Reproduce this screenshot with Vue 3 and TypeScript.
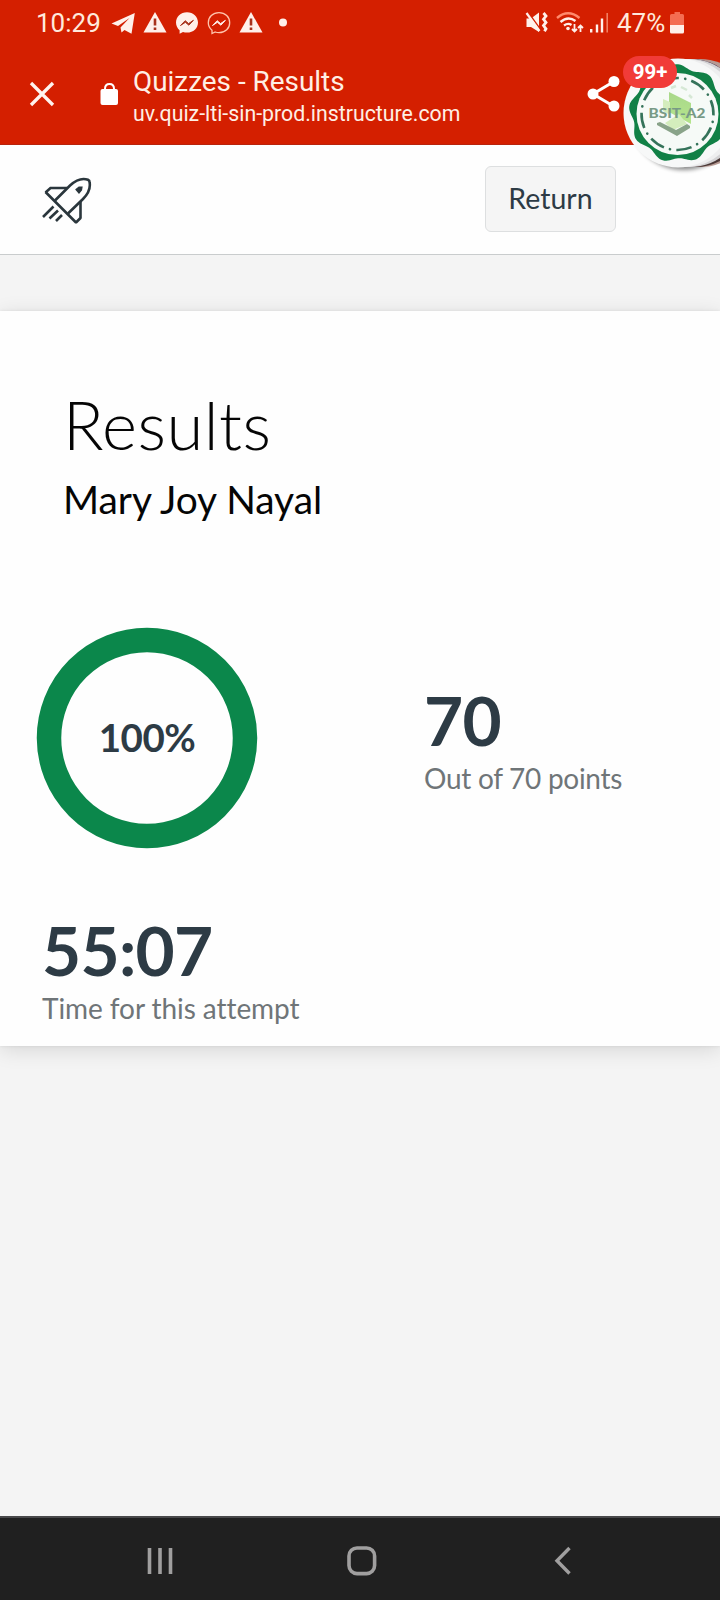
<script setup lang="ts">
interface Stat {
  value: string
  label: string
}

const score: Stat = { value: '70', label: 'Out of 70 points' }
const time: Stat = { value: '55:07', label: 'Time for this attempt' }

/* Scalloped outline of the seal on the floating chat head. */
function scallop(cx: number, cy: number, r: number, amp: number, lobes: number, phase: number): string {
  const pts: string[] = []
  for (let i = 0; i < 180; i++) {
    const a = (i / 180) * Math.PI * 2
    const d = r + amp * Math.cos(lobes * (a - phase))
    pts.push(`${(cx + d * Math.cos(a)).toFixed(2)},${(cy + d * Math.sin(a)).toFixed(2)}`)
  }
  return pts.join(' ')
}
const seal = scallop(56, 57.5, 47, 2.3, 9, 1.2)
</script>

<template>
  <div class="screen">
    <div class="top">
      <div class="status">
        <span class="clock">10:29</span>
        <svg class="notif" width="190" height="46" viewBox="100 0 190 46">
          <path d="M111.500 23.500 L134.800 13 L131.500 33.800 L124.500 30 L121.500 32.500 L120.500 27.500 L129.500 18 L118 26 Z" fill="#fff0ea" />
          <g fill="#fff0ea">
            <path d="M155 12 L166.500 32.500 H143.500 Z" />
            <path d="M251 12 L262.500 32.500 H239.500 Z" />
          </g>
          <g stroke="#a8321c" stroke-width="2.600">
            <path d="M155 18.500 V25.500 M155 27.500 V30 M251 18.500 V25.500 M251 27.500 V30" />
          </g>
          <path d="M187 12.300 C180.600 12.300 176 16.800 176 22.500 C176 25.600 177.400 28.300 179.600 30.200 V33.700 L183 32 C184.300 32.400 185.600 32.600 187 32.600 C193.400 32.600 198 28.200 198 22.500 C198 16.800 193.400 12.300 187 12.300 Z" fill="#fff0ea" />
          <path d="M180.500 25.500 L185.200 20.700 L188.600 23.600 L193.400 20.300 L188.900 25.200 L185.400 22.300 Z" fill="#a8321c" stroke="#a8321c" />
          <path d="M219 12.700 C212.800 12.700 208.300 17 208.300 22.700 C208.300 25.800 209.700 28.300 212 30.200 V33.500 L215.200 32 C216.500 32.500 217.700 32.700 219 32.700 C225.300 32.700 229.700 28.300 229.700 22.700 C229.700 17 225.200 12.700 219 12.700 Z" fill="none" stroke="#ffc5ad" stroke-width="1.300" />
          <path d="M212.500 25.500 L217.200 20.700 L220.600 23.600 L225.400 20.300 L220.900 25.200 L217.400 22.300 Z" fill="#fff0ea" stroke="#fff0ea" />
          <circle cx="283" cy="22.500" r="4" fill="#fff0ea" />
        </svg>
        <svg class="signals" width="92" height="46" viewBox="522 0 92 46" fill="none" stroke="#fff0ea">
          <path d="M526.500 18.500 H531 L539 12.500 V32 L531 27 H526.500 Z" fill="#fff0ea" stroke="none" />
          <path d="M527.500 11.500 L541.500 31" stroke="#d41f00" stroke-width="1.600" />
          <path d="M526.500 13 L539.500 31" stroke-width="2.200" />
          <path d="M543.500 13 l2.500 3 l-2.500 3.200 l2.500 3.200 l-2.500 3.200 l2.500 3.200 l-1.500 2.500" stroke-width="2.800" />
          <path d="M557 18 Q568 8.500 579.500 18" stroke="#ff8a6c" stroke-width="2.400" />
          <path d="M560.500 22 Q568 15.500 575.500 21" stroke-width="2.400" />
          <path d="M564 25.500 Q568 22.500 571.500 25" stroke-width="2.200" />
          <circle cx="568" cy="28.500" r="1.800" fill="#fff0ea" stroke="none" />
          <path d="M574.500 24 V31.500 M572 29 L574.500 31.500 L577 29 M580.500 32 V25.500 M578 28 L580.500 25.500 L583 28" stroke-width="1.800" />
          <path d="M591.200 29 V32.500 M597 24.500 V32.500 M602 18.500 V32.500" stroke-width="2.400" />
          <path d="M607.200 13 V32.500" stroke="#f27f62" stroke-width="1.600" />
        </svg>
        <span class="battery-text">47%</span>
        <svg width="16" height="46" viewBox="669 0 16 46">
          <path d="M674.500 12 H680 V14 H682.500 Q684 14 684 15.500 V25 H670 V15.500 Q670 14 671.500 14 H674.500 Z" fill="#f46d52" />
          <path d="M670 25 H684 V32 Q684 33.500 682.500 33.500 H671.500 Q670 33.500 670 32 Z" fill="#fff0ea" />
        </svg>
      </div>
      <div class="toolbar">
        <svg class="close" width="26" height="26" viewBox="0 0 26 26">
          <path d="M2 2 L24 24 M24 2 L2 24" stroke="#fff3ee" stroke-width="3.300" fill="none" />
        </svg>
        <svg class="lock" width="20" height="25" viewBox="0 0 20 25">
          <path d="M5 10 V6.800 Q5 2 9.500 2 Q14 2 14 6.800 V10" fill="none" stroke="#fff" stroke-width="2" />
          <rect x=".5" y="7" width="17.500" height="16" rx="2" fill="#fff" />
        </svg>
        <div class="page-id">
          <div class="page-title">Quizzes - Results</div>
          <div class="page-url">uv.quiz-lti-sin-prod.instructure.com</div>
        </div>
        <svg class="share" width="34" height="38" viewBox="0 0 34 38">
          <path d="M27 6.500 L6 19 L27 31.500" stroke="#fff" stroke-width="3" fill="none" />
          <g fill="#fff">
            <circle cx="27" cy="6.500" r="5.500" />
            <circle cx="6" cy="19" r="5.500" />
            <circle cx="27" cy="31" r="5.500" />
          </g>
        </svg>
      </div>
    </div>

    <header class="app-bar">
      <svg class="rocket" width="50" height="48" viewBox="0 0 50 48" fill="none" stroke="#2a363c" stroke-width="2.600">
        <path d="M13 23.500 L28 8.500 C34 3 41 1 46 2.800 Q47.700 3.500 47.700 6 C48.500 12 46 17 41 22 L26 36.500" />
        <path d="M3.500 15 L34 45.500 L38.500 41 V24.500" stroke-linejoin="bevel" />
        <path d="M3.500 15.500 L8.500 11 H25" />
        <path d="M34 12.500 L37 10 H40 L39.500 13 L37 16 Z" fill="#2a363c" stroke-width="1.200" />
        <path d="M1 40 L11.500 29.500 M7.500 41.500 L16 33.500 M14 44 L20 38" />
      </svg>
      <button class="return">Return</button>
    </header>

    <main class="body">
      <section class="card">
        <h1>Results</h1>
        <h2>Mary Joy Nayal</h2>
        <div class="stats">
          <div class="donut">
            <svg width="222" height="222" viewBox="0 0 222 222">
              <circle cx="111" cy="111" r="98" fill="none" stroke="#0b874b" stroke-width="24.500" />
              <text x="111" y="124.700" text-anchor="middle">100%</text>
            </svg>
          </div>
          <div class="stat score">
            <strong>{{ score.value }}</strong>
            <span>{{ score.label }}</span>
          </div>
        </div>
        <div class="stat time">
          <strong>{{ time.value }}</strong>
          <span>{{ time.label }}</span>
        </div>
      </section>
    </main>

    <nav class="nav">
      <svg width="26" height="30" viewBox="0 0 26 30">
        <path d="M2.500 2 V28 M13 2 V28 M23.500 2 V28" stroke="#a09f9f" stroke-width="3.600" />
      </svg>
      <svg class="home" width="30" height="30" viewBox="0 0 30 30">
        <rect x="2" y="2" width="25.600" height="25.600" rx="8" fill="none" stroke="#a09f9f" stroke-width="3.600" />
      </svg>
      <svg width="18" height="30" viewBox="0 0 18 30">
        <path d="M15.500 2 L3 14.700 L15.500 27.500" fill="none" stroke="#a09f9f" stroke-width="3.400" />
      </svg>
    </nav>

    <div class="chat-head">
      <svg width="98" height="120" viewBox="0 0 98 120">
        <defs>
          <linearGradient id="paper" x1="0" y1="0" x2="0" y2="1">
            <stop offset="0" stop-color="#a9d88a" />
            <stop offset="1" stop-color="#b5e58c" />
          </linearGradient>
          <filter id="drop" x="-20%" y="-20%" width="140%" height="140%">
            <feGaussianBlur stdDeviation="2" />
          </filter>
        </defs>
        <circle cx="62" cy="60" r="54" fill="#000" opacity=".45" filter="url(#drop)" />
        <circle cx="78" cy="57" r="54" fill="#b79a93" />
        <path d="M72 3 Q90 5 98 12 V22 L82 6 Z" fill="#37213f" />
        <path d="M60 110 L98 92 V105 Q86 111 74 111 Z" fill="#4b3836" />
        <circle cx="68" cy="57" r="54" fill="#d3d2d4" />
        <circle cx="63" cy="57" r="54" fill="#eeeeef" />
        <circle cx="56" cy="57" r="54.500" fill="#f7f8f8" />
        <polygon :points="seal" fill="#118046" />
        <circle cx="55.500" cy="58" r="41" fill="#f6faf7" />
        <g fill="none" stroke="#35735a" stroke-width="2.600" transform="rotate(22 55.500 58)">
          <circle cx="55.500" cy="58" r="36" stroke-dasharray="15.500 12.774" />
          <circle cx="55.500" cy="58" r="36" stroke-linecap="round" stroke-dasharray=".1 28.174" stroke-dashoffset="-21.900" />
        </g>
        <path d="M47 36 L69 47 V68 L47 56 Z" fill="url(#paper)" />
        <path d="M41 43 L48 46 V59 L41 55 Z M57 58 L65 68 L51 74 L43 67 Z" fill="#d4edbd" />
        <path d="M49 32 l5 -2 M59 31 l6 3 M67 39 l3 3" stroke="#d6e8d5" stroke-width="2.500" />
        <path d="M35 67 L38 66 L54 74 L65 68 L68 70 V72 L55 80 L35 69 Z" fill="#89a389" />
        <text x="26.500" y="62" textLength="57" lengthAdjust="spacingAndGlyphs">BSIT-A2</text>
      </svg>
      <span class="badge">99+</span>
    </div>
  </div>
</template>

<style>
body {
  margin: 0;
}
</style>

<style scoped>
.screen {
  position: relative;
  width: 720px;
  height: 1600px;
  overflow: hidden;
  display: flex;
  flex-direction: column;
  background: #f4f4f4;
  font-family: Lato, "Liberation Sans", sans-serif;
}
svg {
  display: block;
  flex: none;
}
.top {
  height: 145px;
  box-sizing: border-box;
  background: #d41f00;
  border-bottom: 1px solid #b8240d;
  font-family: Roboto, "Liberation Sans", sans-serif;
}
.status {
  display: flex;
  height: 46px;
  line-height: 46px;
  padding-left: 36px;
  color: #ffe9dc;
  font-size: 26px;
}
.clock {
  width: 64px;
}
.signals {
  margin-left: 232px;
}
.battery-text {
  width: 52px;
  margin-left: 3px;
  white-space: nowrap;
}
.toolbar {
  display: flex;
  align-items: flex-start;
  padding: 18px 0 0 29px;
  color: #ffefe5;
}
.close {
  margin-top: 17px;
}
.lock {
  margin: 18px 0 0 45px;
}
.page-id {
  width: 454px;
  margin-left: 13px;
}
.page-title {
  font-size: 27.900px;
  line-height: 34px;
  padding-top: 1px;
}
.page-url {
  font-size: 21.300px;
  line-height: 28px;
  margin-top: 1px;
}
.share {
  margin-top: 11px;
}
.app-bar {
  display: flex;
  height: 110px;
  box-sizing: border-box;
  padding: 21px 104px 0 42px;
  justify-content: space-between;
  background: #fefefe;
  border-bottom: 1px solid #c9cccd;
}
.rocket {
  margin-top: 11px;
}
.return {
  width: 131px;
  height: 66px;
  padding: 0 0 2px;
  box-sizing: border-box;
  border: 1px solid #dddfe0;
  border-radius: 6px;
  background: #f5f5f5;
  color: #2d3b45;
  font: 28.500px/62px Lato, sans-serif;
}
.body {
  flex: 1;
  padding-top: 56px;
}
.card {
  height: 735px;
  box-sizing: border-box;
  padding-top: 73px;
  background: #fefefe;
  box-shadow: 0 0 3px rgba(0, 0, 0, 0.08), 0 4px 20px rgba(0, 0, 0, 0.12);
}
h1,
h2 {
  margin: 0;
  color: #050505;
}
h1 {
  padding-left: 63px;
  font-size: 67px;
  font-weight: 300;
  line-height: 80px;
  letter-spacing: 0.5px;
}
h2 {
  padding-left: 63px;
  font-size: 38.900px;
  font-weight: 400;
  line-height: 46px;
  margin-top: 12px;
}
.stats {
  display: flex;
  margin-top: 105px;
  padding-left: 36px;
}
.donut text {
  font: 700 38.500px Lato, sans-serif;
  letter-spacing: -0.5px;
  fill: #2d3b45;
}
.stat {
  display: flex;
  flex-direction: column;
}
.stat strong {
  font-size: 67.500px;
  line-height: 66px;
  margin-bottom: 2px;
  letter-spacing: -0.7px;
  color: #2d3b45;
}
.stat span {
  font-size: 28px;
  line-height: 34px;
  margin-top: 6px;
  color: #6f7578;
  font-variant-ligatures: none;
}
.score {
  margin: 60px 0 0 166px;
}
.score span {
  letter-spacing: -0.28px;
}
.time {
  margin: 68px 0 0 42px;
}
.time span {
  letter-spacing: -0.07px;
}
.nav {
  display: flex;
  height: 84px;
  box-sizing: border-box;
  border-top: 2px solid #48484a;
  background: #202020;
  padding: 28px 148px 0 147px;
  justify-content: space-between;
}
.home {
  margin-right: 4px;
}
.chat-head {
  position: absolute;
  left: 622px;
  top: 56px;
  width: 98px;
  height: 120px;
}
.chat-head text {
  font: 900 13px Lato, sans-serif;
  fill: #789a86;
}
.badge {
  position: absolute;
  left: 1px;
  top: 0;
  width: 54px;
  height: 32px;
  border-radius: 16px;
  background: #f13b38;
  color: #fff;
  font: 700 20.500px/33px Roboto, sans-serif;
  text-align: center;
}
</style>
